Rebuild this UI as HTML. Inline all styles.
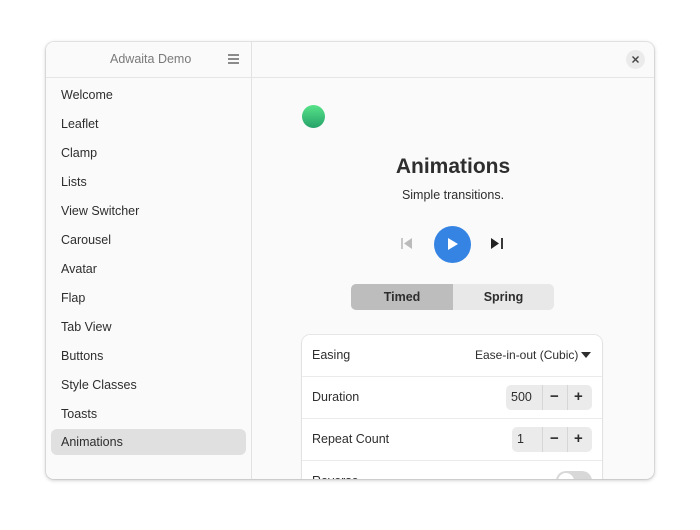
<!DOCTYPE html><html><head><style>
body{margin:0;width:700px;height:530px;background:#fff;font-family:"Liberation Sans",sans-serif;position:relative;overflow:hidden}
.win{position:absolute;left:46px;top:42px;width:608px;height:437px;background:#fafafa;border-radius:8px;box-shadow:0 1px 4px rgba(0,0,0,.25),0 0 0 1px rgba(0,0,0,.06);overflow:hidden}
.side{position:absolute;left:0;top:0;width:205px;height:100%;background:#fafafa;border-right:1px solid #e2e2e2}
.hb{position:absolute;left:0;top:0;height:35px;border-bottom:1px solid #e5e5e5}
.it{position:absolute;left:15px;font-size:12.5px;color:#2e2e2e}
.sel{position:absolute;left:5px;top:387px;width:195px;height:26px;background:#e0e0e0;border-radius:6px}
.abs{position:absolute}
.card{position:absolute;left:256px;top:293px;width:300px;height:200px;background:#fff;border-radius:8px;box-shadow:0 0 0 1px rgba(0,0,0,.07),0 1px 2px rgba(0,0,0,.08)}
.row{position:absolute;left:0;width:300px;height:41px;border-bottom:1px solid #ebebeb;font-size:12.5px;color:#2e2e2e}
.row span{position:absolute;left:10px;top:13px}
.spin{position:absolute;top:8px;height:25px;background:#ebebeb;border-radius:5px;font-size:12.5px}
</style></head><body>
<div class="win">
<div class="side">
<div class="hb" style="width:205px"></div>
<div class="abs" style="left:64px;top:10px;font-size:12.5px;color:#7a7a7a">Adwaita Demo</div>
<svg class="abs" style="left:182px;top:12px" width="12" height="10"><path d="M0 1h11M0 5h11M0 9h11" stroke="#666" stroke-width="1.4"/></svg>
<div class="sel"></div>
<div class="it" style="top:46px">Welcome</div>
<div class="it" style="top:75px">Leaflet</div>
<div class="it" style="top:104px">Clamp</div>
<div class="it" style="top:133px">Lists</div>
<div class="it" style="top:162px">View Switcher</div>
<div class="it" style="top:191px">Carousel</div>
<div class="it" style="top:220px">Avatar</div>
<div class="it" style="top:249px">Flap</div>
<div class="it" style="top:278px">Tab View</div>
<div class="it" style="top:307px">Buttons</div>
<div class="it" style="top:336px">Style Classes</div>
<div class="it" style="top:365px">Toasts</div>
<div class="it" style="top:393px">Animations</div>
</div>
<div class="hb" style="left:206px;width:402px"></div>
<div class="abs" style="left:580px;top:8px;width:19px;height:19px;border-radius:50%;background:#ebebeb"></div>
<svg class="abs" style="left:586px;top:14px" width="7" height="7"><path d="M0.5 .5l6 6M6.5 .5l-6 6" stroke="#444" stroke-width="1.4"/></svg>
<div class="abs" style="left:256px;top:63px;width:23px;height:23px;border-radius:50%;background:linear-gradient(#57e389,#26a269)"></div>
<div class="abs" style="left:206px;width:402px;top:113px;text-align:center;font-size:21px;font-weight:bold;color:#2e2e2e">Animations</div>
<div class="abs" style="left:206px;width:402px;top:146px;text-align:center;font-size:12.5px;color:#2e2e2e">Simple transitions.</div>
<svg class="abs" style="left:355px;top:196px" width="12" height="11"><path d="M1 0v11" stroke="#bbb" stroke-width="1.6"/><path d="M11 0v11L3 5.5z" fill="#bbb"/></svg>
<div class="abs" style="left:388px;top:184px;width:37px;height:37px;border-radius:50%;background:#3584e4"></div>
<svg class="abs" style="left:402px;top:196px" width="10" height="12"><path d="M0 0v12l10-6z" fill="#fff"/></svg>
<svg class="abs" style="left:445px;top:196px" width="12" height="11"><path d="M0 0v11l8-5.5z" fill="#222"/><path d="M11 0v11" stroke="#222" stroke-width="1.8"/></svg>
<div class="abs" style="left:305px;top:242px;width:203px;height:26px;border-radius:5px;background:#e8e8e8;overflow:hidden;font-size:12.5px;font-weight:bold;color:#2e2e2e">
<div class="abs" style="left:0;top:0;width:102px;height:26px;background:#bdbdbd"></div>
<div class="abs" style="left:0;width:102px;top:6px;text-align:center">Timed</div>
<div class="abs" style="left:102px;width:101px;top:6px;text-align:center">Spring</div>
</div>
<div class="card">
<div class="row" style="top:0"><span>Easing</span><span style="left:173px;font-size:12px">Ease-in-out (Cubic)</span><svg class="abs" style="left:279px;top:17px" width="10" height="6"><path d="M0 0h10L5 6z" fill="#2e2e2e"/></svg></div>
<div class="row" style="top:42px"><span>Duration</span>
<div class="spin" style="left:204px;width:86px"><span style="left:5px;top:5px">500</span><div class="abs" style="left:36px;top:0;width:1px;height:25px;background:#d6d6d6"></div><div class="abs" style="left:61px;top:0;width:1px;height:25px;background:#d6d6d6"></div><b class="abs" style="left:44px;top:3px;font-size:15px">−</b><b class="abs" style="left:68px;top:3px;font-size:15px">+</b></div></div>
<div class="row" style="top:84px"><span>Repeat Count</span>
<div class="spin" style="left:210px;width:80px"><span style="left:5px;top:5px">1</span><div class="abs" style="left:30px;top:0;width:1px;height:25px;background:#d6d6d6"></div><div class="abs" style="left:55px;top:0;width:1px;height:25px;background:#d6d6d6"></div><b class="abs" style="left:38px;top:3px;font-size:15px">−</b><b class="abs" style="left:62px;top:3px;font-size:15px">+</b></div></div>
<div class="row" style="top:126px;border:0"><span style="top:13px">Reverse</span><div class="abs" style="left:254px;top:10px;width:36px;height:20px;border-radius:10px;background:#d8d8d8"><div class="abs" style="left:2px;top:2px;width:16px;height:16px;border-radius:50%;background:#fff"></div></div></div>
</div>
</div>
</body></html>
